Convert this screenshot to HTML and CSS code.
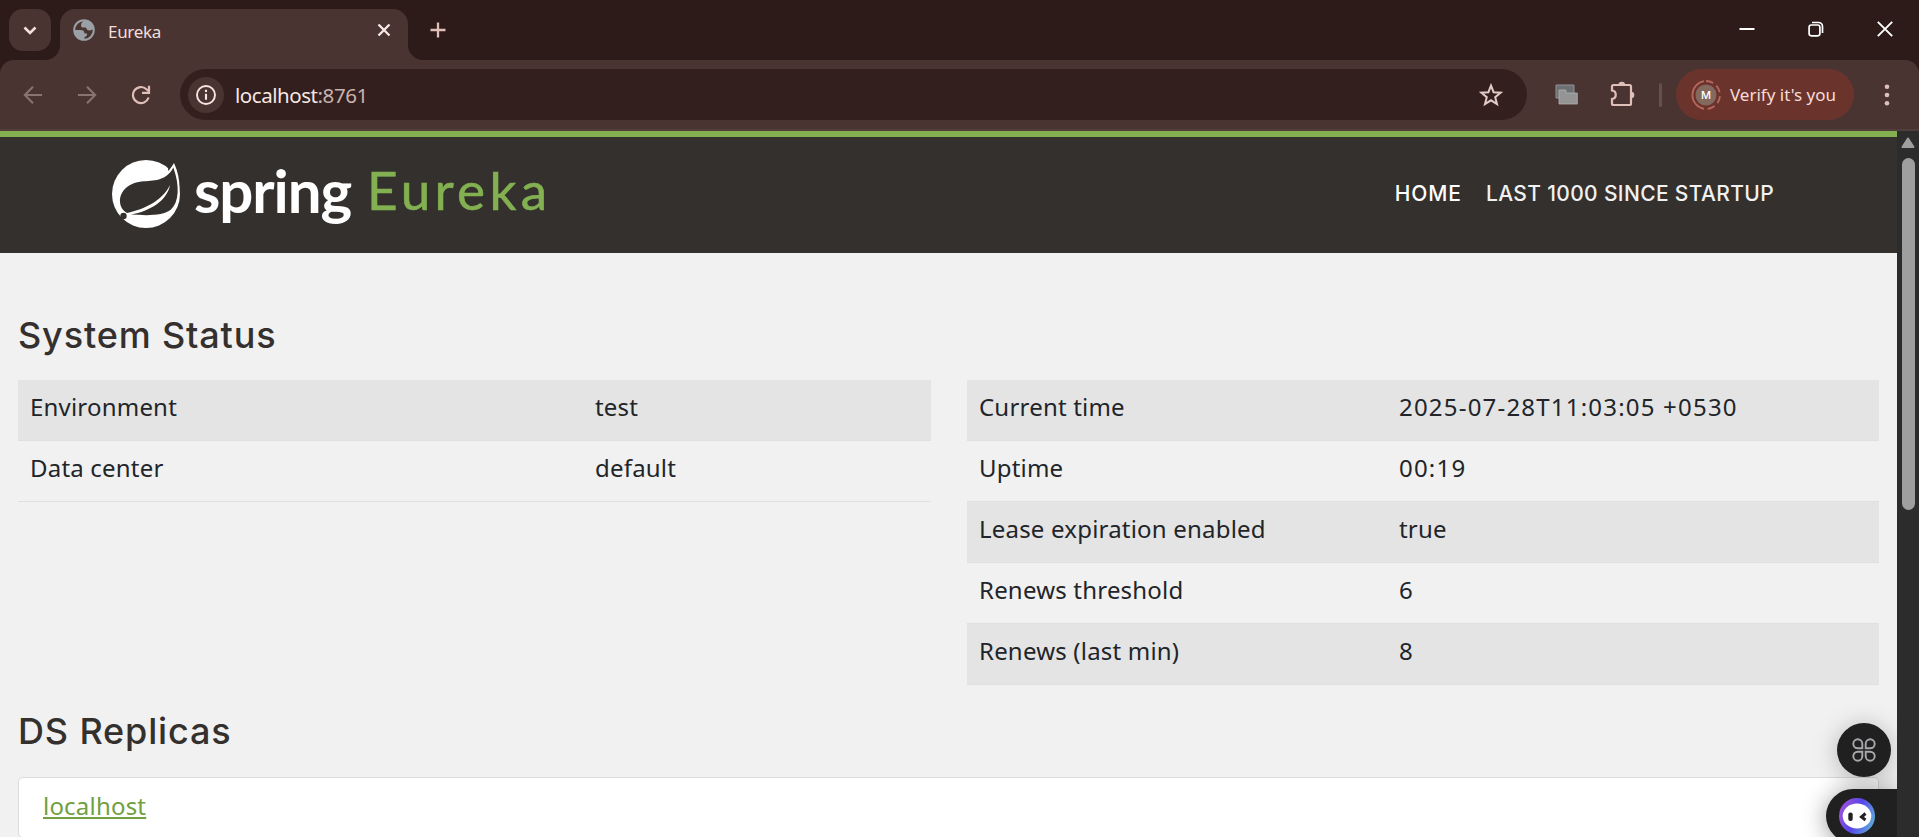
FILE: index.html
```html
<!DOCTYPE html>
<html lang="en">
<head>
<meta charset="utf-8">
<title>Eureka</title>
<link rel="stylesheet" href="styles.css">
</head>
<body>
<div class="browser">
  <div class="tabstrip">
    <div class="tab-search"><svg width="42" height="42" viewBox="0 0 42 42"><path d="M15.500 18.500l5.500 5.500 5.500-5.500" fill="none" stroke="#f3e0dd" stroke-width="2.600"/></svg></div>
    <div class="tab">
      <svg class="globe" width="22" height="22" viewBox="0 0 22 22"><circle cx="11" cy="11" r="9.800" fill="none" stroke="#9aa0a6" stroke-width="2"/><path d="M11.500 1C9.500 3 8 4 8 6.500c0 1.500 1 2 2.500 2h2.500c.5 2 1.500 3 3.500 3 2 0 2.500-1 4.500-.5C21 5 17 1 11.500 1zM1.500 11h6c2.500 0 4 1 4 3.500H14c.5 2-.5 3-2.500 3.500v3C5 21 1 16.500 1.500 11z" fill="#9aa0a6"/></svg>
      <span class="tab-title">Eureka</span>
      <svg class="tab-close" width="14" height="14" viewBox="0 0 14 14"><path d="M1.500 1.500l11 11M12.500 1.500l-11 11" stroke="#f6e9e7" stroke-width="2.300"/></svg>
    </div>
    <svg class="new-tab" width="16" height="16" viewBox="0 0 16 16"><path d="M8 .5v15M.5 8h15" stroke="#e0bfb8" stroke-width="2.300"/></svg>
    <div class="window-buttons">
      <svg width="16" height="16" viewBox="0 0 16 16"><path d="M.5 8h15" stroke="#fff" stroke-width="2"/></svg>
      <svg width="16" height="16" viewBox="0 0 16 16"><g fill="none" stroke="#fff" stroke-width="1.700"><rect x="1.100" y="4" width="10.800" height="10.800" rx="2.200"/><path d="M4 1.500h6.500a4 4 0 0 1 4 4V12"/></g></svg>
      <svg width="16" height="16" viewBox="0 0 16 16"><path d="M.8.8l14.400 14.400M15.200.8L.8 15.200" stroke="#fff" stroke-width="1.900"/></svg>
    </div>
  </div>
  <div class="toolbar">
    <svg class="nav-icon" width="20" height="20" viewBox="0 0 20 20"><path d="M19 10H2M10 1.800L1.800 10l8.200 8.200" fill="none" stroke="#8b7370" stroke-width="2"/></svg>
    <svg class="nav-icon" width="20" height="20" viewBox="0 0 20 20"><path d="M1 10h17M10 1.800l8.200 8.200-8.200 8.200" fill="none" stroke="#8b7370" stroke-width="2"/></svg>
    <svg class="nav-icon" width="20" height="20" viewBox="0 0 20 20"><path d="M17.600 12.500A8 8 0 1 1 15.500 4.200L17.500 6" fill="none" stroke="#e0bfb8" stroke-width="2.200"/><path d="M18 .8v7h-7" fill="none" stroke="#e0bfb8" stroke-width="2.200"/></svg>
    <div class="omnibox">
      <span class="site-info"><svg width="22" height="22" viewBox="0 0 22 22"><circle cx="11" cy="11" r="9" fill="none" stroke="#f6e5e2" stroke-width="1.900"/><path d="M11 9.800v6M11 5.800v2.200" stroke="#f6e5e2" stroke-width="2.100"/></svg></span>
      <span class="url">localhost<span class="port">:8761</span></span>
      <svg class="star" width="24" height="24" viewBox="0 0 24 24"><path d="M12 2.600l2.600 6.600 7.100.5-5.500 4.500 1.800 6.900-6-3.800-6 3.800 1.800-6.900-5.500-4.500 7.100-.5z" fill="none" stroke="#e3cbc7" stroke-width="2"/></svg>
    </div>
    <svg class="ext" width="23" height="21" viewBox="0 0 23 21"><path d="M1 1h18v13H1z" fill="#6c7072" stroke="#8f9496"/><path d="M4 6h7v3h11.300v11H4z" fill="#949494" stroke="#b0b0b0" stroke-width=".8"/></svg>
    <svg class="puzzle" width="26" height="26" viewBox="0 0 26 26"><path d="M3.500 4h16a1.500 1.500 0 0 1 1.500 1.500v17a1.500 1.500 0 0 1-1.500 1.500h-16A1.500 1.500 0 0 1 2 22.500V18c5-.5 5-8 0-8.500v-4A1.500 1.500 0 0 1 3.500 4z" fill="none" stroke="#e0bfb8" stroke-width="2.200"/><path d="M8.500 4a3.300 3.300 0 0 1 6.600 0zM21 10.700a3.300 3.300 0 0 1 0 6.600z" fill="#e0bfb8"/></svg>
    <span class="divider"></span>
    <div class="profile">
      <svg width="32" height="32" viewBox="0 0 32 32"><circle cx="16" cy="16" r="10.500" fill="#84695f"/><path d="M14 2.200a14 14 0 0 0 0 27.600" fill="none" stroke="#b7675d" stroke-width="1.800"/><path d="M16 2a14 14 0 0 1 0 28" fill="none" stroke="#b7675d" stroke-width="1.800" stroke-dasharray="7.500 4"/><text class="initial" x="16" y="20" text-anchor="middle">M</text></svg>
      <span class="verify">Verify it's you</span>
    </div>
    <svg class="kebab" width="6" height="22" viewBox="0 0 6 22"><g fill="#e0bfb8"><circle cx="3" cy="2.700" r="2.300"/><circle cx="3" cy="11" r="2.300"/><circle cx="3" cy="19.300" r="2.300"/></g></svg>
  </div>
</div>
<div class="viewport">
  <div class="page">
    <nav class="navbar">
      <div class="brand">
        <svg class="leaf" width="72" height="72" viewBox="10 8 72 72"><circle cx="46" cy="44" r="34" fill="#fff"/><path d="M70 8h12v24h-4L68 20z" fill="#34302d"/><path d="M74 13C68 23 62 28 62 31l8 31c9-7 14-27 4-49z" fill="#fff"/><path d="M73.300 17.500C67 30 56 30.500 44 31.300C29 32 19.500 41 20 52c.3 5 3 8.500 7 11C45 59 62 51 70 35C67 51 50 61 31 64.600C48 65.500 63 66 71 59.500C79 52 80 36 73.300 17.500z" fill="#34302d"/><circle cx="23.500" cy="66" r="3.200" fill="#34302d"/></svg>
        <span class="spring">spring</span><span class="eureka">Eureka</span>
      </div>
      <div class="menu"><span class="active">HOME</span><span>LAST 1000 SINCE STARTUP</span></div>
    </nav>
    <main class="content">
      <h1>System Status</h1>
      <div class="columns">
        <div class="table left">
          <div class="row"><span>Environment</span><span>test</span></div>
          <div class="row"><span>Data center</span><span>default</span></div>
        </div>
        <div class="table right">
          <div class="row"><span>Current time</span><span class="time">2025-07-28T11:03:05 +0530</span></div>
          <div class="row"><span>Uptime</span><span class="time">00:19</span></div>
          <div class="row"><span>Lease expiration enabled</span><span>true</span></div>
          <div class="row"><span>Renews threshold</span><span>6</span></div>
          <div class="row"><span>Renews (last min)</span><span>8</span></div>
        </div>
      </div>
      <h1 class="replicas">DS Replicas</h1>
      <div class="card"><a class="link">localhost</a></div>
    </main>
    <div class="fab"><svg width="24" height="24" viewBox="0 0 24 24"><g fill="none" stroke="#aaa7ad" stroke-width="1.900"><path d="M10.300 10.300V5.800a4.500 4.500 0 1 0-4.500 4.500z"/><path d="M13.700 10.300V5.800a4.500 4.500 0 1 1 4.500 4.500z"/><path d="M10.300 13.700v4.500a4.500 4.500 0 1 1-4.500-4.500z"/><path d="M13.700 13.700v4.500a4.500 4.500 0 1 0 4.500-4.500z"/></g></svg></div>
    <div class="assistant"><svg width="36" height="36" viewBox="0 0 36 36"><defs><linearGradient id="ring" x1="0" y1=".4" x2="1" y2=".8"><stop offset="0" stop-color="#9a50dc"/><stop offset=".45" stop-color="#5846e8"/><stop offset="1" stop-color="#5cb8dc"/></linearGradient></defs><circle cx="18" cy="18" r="18" fill="url(#ring)"/><ellipse cx="18" cy="18" rx="14.300" ry="12.500" fill="#fff"/><rect x="9.300" y="14.500" width="4.400" height="8.500" rx="2" fill="#222"/><path d="M26.500 15.500L22.500 19l4 3" fill="none" stroke="#222" stroke-width="3"/></svg></div>
  </div>
  <div class="scrollbar"><svg width="14" height="12" viewBox="0 0 14 12"><path d="M7 1.500L12.500 10h-11z" fill="#9f9f9f" stroke="#9f9f9f" stroke-width="2" stroke-linejoin="round"/></svg><div class="thumb"></div></div>
</div>
</body>
</html>
```
FILE: styles.css
```css
* { box-sizing: border-box; }
body { margin: 0; width: 1919px; height: 837px; overflow: hidden; background: #2c1b18; font-family: "Noto Sans", sans-serif; }
svg { display: block; flex: none; }

/* Browser chrome */
.browser { height: 131px; }
.tabstrip { height: 60px; display: flex; padding: 9px 26px 0 9px; }
.tab-search { width: 42px; height: 42px; border-radius: 14px; background: #4a3432; }
.tab { position: relative; width: 348px; height: 51px; margin-left: 9px; padding: 0 17px 0 13px; display: flex; align-items: flex-start; border-radius: 15px 15px 0 0; background: #4a3432; }
.tab::before, .tab::after { content: ""; position: absolute; bottom: 0; width: 15px; height: 15px; }
.tab::before { left: -15px; background: radial-gradient(circle at 0 0, transparent 14.500px, #4a3432 15.500px); }
.tab::after { right: -15px; background: radial-gradient(circle at 100% 0, transparent 14.500px, #4a3432 15.500px); }
.globe { margin-top: 10px; }
.tab-title { margin: 11px auto 0 13px; font-size: 17px; line-height: 24px; letter-spacing: -0.3px; color: #f1dedb; }
.tab-close { margin-top: 14px; }
.new-tab { margin: 13px auto 0 22px; }
.window-buttons { display: flex; gap: 53px; padding-top: 12px; }
.toolbar { height: 71px; display: flex; align-items: center; padding: 0 28px 0 23px; border-radius: 14px 14px 0 0; border-bottom: 2px solid #513d39; background: #4a3432; }
.nav-icon { margin-right: 34px; }
.nav-icon + .nav-icon + .nav-icon { margin-right: 29px; }
.omnibox { flex: none; width: 1347px; height: 51px; display: flex; align-items: center; padding: 0 24px 0 8px; border-radius: 26px; background: #331f1d; }
.site-info { width: 36px; height: 36px; display: flex; align-items: center; justify-content: center; border-radius: 50%; background: #4a3432; }
.url { margin-left: 11px; font-size: 20.500px; letter-spacing: -0.450px; color: #f6e7e4; }
.port { color: #c9b3af; }
.star { margin-left: auto; }
.ext { margin-left: 28px; }
.puzzle { margin: -2px 0 0 32px; }
.divider { flex: none; width: 3px; height: 24px; margin-left: 23px; border-radius: 2px; background: #675049; }
.profile { flex: none; width: 178px; height: 51px; margin-left: 14px; padding-left: 14px; display: flex; align-items: center; border-radius: 26px; background: #6a342d; }
.initial { font: 500 11px Inter, sans-serif; fill: #fff; }
.verify { margin-left: 8px; font-size: 17px; color: #f8dcd7; white-space: nowrap; }
.kebab { margin-left: 30px; }

/* Page */
.viewport { display: flex; height: 706px; }
.page { position: relative; width: 1897px; height: 706px; overflow: hidden; background: #f1f1f1; }
.navbar { height: 122px; display: flex; justify-content: space-between; padding: 0 123px 0 110px; border-top: 6px solid #83b051; background: #34302d; }
.brand { display: flex; }
.leaf { margin-top: 21px; }
.spring, .eureka { font-family: Lato, sans-serif; line-height: 72px; height: 72px; margin-top: 17px; }
.spring { width: 173px; margin-left: 12px; font-size: 60px; font-weight: 700; letter-spacing: -1.100px; color: #fff; }
.eureka { font-size: 53px; letter-spacing: 4.300px; color: #83b051; -webkit-text-stroke: 0.600px #83b051; }
.menu { display: flex; gap: 24px; margin-top: 43px; font: 500 21px/28px Inter, sans-serif; letter-spacing: 0.350px; color: #f1f1f1; }
.active { letter-spacing: 0.900px; color: #fff; }
.content { padding: 62px 18px 0; }
h1 { margin: 0; height: 65px; font: 500 36px/40px Inter, sans-serif; letter-spacing: 0.850px; color: #34302d; }
.columns { display: flex; justify-content: space-between; height: 305px; }
.table { width: 913px; }
.right { width: 912px; }
.row { display: grid; height: 61px; padding-left: 12px; font-size: 24px; line-height: 54px; letter-spacing: 0.200px; color: #212529; border-bottom: 1px solid #dee0e2; }
.left .row { grid-template-columns: 565px 1fr; }
.right .row { grid-template-columns: 420px 1fr; }
.row:nth-child(odd) { background: #e4e4e4; }
.row .time { letter-spacing: 1.200px; }
.replicas { height: 92px; padding-top: 26px; }
.card { height: 61px; padding: 12px 24px; border: 1px solid #dcdcdc; border-radius: 5px; background: #fff; font-size: 24px; line-height: 31px; letter-spacing: 0.200px; }
.link { color: #70a040; text-decoration: underline; text-decoration-thickness: 2px; text-underline-offset: 2px; text-decoration-skip-ink: none; }

/* Floating extension buttons */
.fab { position: absolute; left: 1837px; top: 592px; width: 54px; height: 54px; display: flex; align-items: center; justify-content: center; border-radius: 50%; background: #202020; box-shadow: 0 3px 24px rgba(0, 0, 0, .25); }
.assistant { position: absolute; left: 1826px; top: 658px; width: 71px; height: 54px; padding: 9px 0 0 13px; border-radius: 27px 0 0 27px; background: #202020; box-shadow: 0 3px 24px rgba(0, 0, 0, .4); }

.scrollbar { width: 22px; padding: 6px 0 0 4px; background: #2c2c2c; }
.thumb { width: 13px; height: 352px; margin: 9px 0 0 1px; border-radius: 7px; background: #9f9f9f; }
```
